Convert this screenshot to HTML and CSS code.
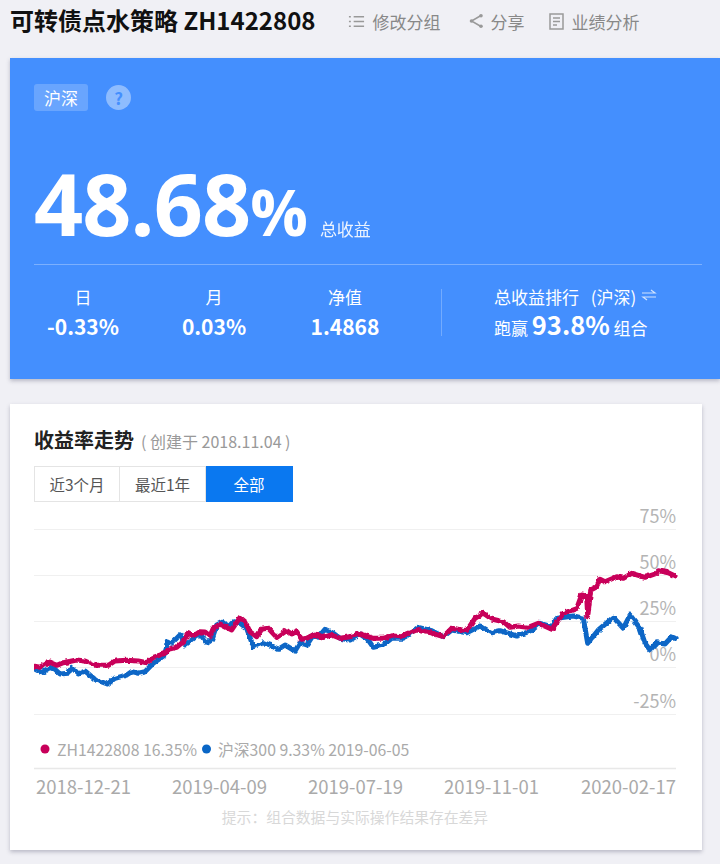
FILE: index.html
```html
<!DOCTYPE html>
<html lang="zh">
<head>
<meta charset="utf-8">
<title>可转债点水策略</title>
<link rel="stylesheet" href="styles.css">
</head>
<body>
<header class="top">
  <h1 class="top-title">可转债点水策略 ZH1422808</h1>
  <nav class="top-actions">
    <a class="action">
      <svg class="action-icon" viewBox="0 0 18 16"><path d="M1 3h2M1 8h2M1 13h2M6 3h11M6 8h11M6 13h11" fill="none" stroke="#999" stroke-width="1.6"/></svg>修改分组</a>
    <a class="action action-share">
      <svg class="action-icon icon-share" viewBox="0 0 14 16"><path d="M12 2.500 2.500 8l9.500 5.500" fill="none" stroke="#999" stroke-width="1.500"/><circle cx="12" cy="2.800" r="1.800" fill="#999"/><circle cx="2.500" cy="8" r="1.800" fill="#999"/><circle cx="12" cy="13.200" r="1.800" fill="#999"/></svg>分享</a>
    <a class="action">
      <svg class="action-icon icon-doc" viewBox="0 0 15 17"><path d="M1 1h13v15H1zM4 5h7M4 8.500h7M4 12h4" fill="none" stroke="#999" stroke-width="1.500"/></svg>业绩分析</a>
  </nav>
</header>

<section class="hero">
  <div class="hero-tags">
    <span class="tag">沪深</span>
    <span class="help">?</span>
  </div>
  <div class="total">
    <span class="total-num">48.68</span><span class="total-pct">%</span>
    <span class="total-label">总收益</span>
  </div>
  <div class="stats">
    <div class="stat"><div class="stat-label">日</div><div class="stat-value">-0.33%</div></div>
    <div class="stat"><div class="stat-label">月</div><div class="stat-value">0.03%</div></div>
    <div class="stat"><div class="stat-label">净值</div><div class="stat-value">1.4868</div></div>
    <div class="rank">
      <div class="rank-title">总收益排行 (沪深)<svg class="swap" viewBox="0 0 16 12"><path d="M1 4h13L10 1M15 8H2l4 3" fill="none" stroke="#fff" stroke-opacity=".75" stroke-width="1.200"/></svg></div>
      <div class="rank-line">跑赢 <strong class="rank-num">93.8%</strong> 组合</div>
    </div>
  </div>
</section>

<section class="card">
  <h2 class="card-title">收益率走势<span class="card-sub">( 创建于 2018.11.04 )</span></h2>
  <div class="ranges">
    <button class="range">近3个月</button>
    <button class="range">最近1年</button>
    <button class="range range-active">全部</button>
  </div>
  <svg class="chart" viewBox="34 500 652 303">
    <defs>
      <filter id="rough" filterUnits="userSpaceOnUse" x="20" y="550" width="670" height="150">
        <feTurbulence type="fractalNoise" baseFrequency=".22" numOctaves="2" seed="4"/>
        <feDisplacementMap in="SourceGraphic" scale="3.500" xChannelSelector="R" yChannelSelector="G"/>
        <feGaussianBlur stdDeviation=".35"/>
      </filter>
    </defs>
    <g class="grid">
      <path d="M34 529.500H676M34 575.500H676M34 621.500H676M34 667.500H676M34 714.500H676"/>
      <path class="axis" d="M34 768.500H676"/>
    </g>
    <g class="y-labels">
      <text x="676" y="523">75%</text>
      <text x="676" y="569">50%</text>
      <text x="676" y="615">25%</text>
      <text x="676" y="661">0%</text>
      <text x="676" y="708">-25%</text>
    </g>
    <g class="lines">
    <polyline class="line line-blue" points="33,668 41.700,672.700 50,667.300 55,669.300 60,674 68.300,673.300 71.700,667.300 78.300,674 85,671 95,679.300 107.300,684 115,678.300 126.700,675 131.700,671.700 138.300,673.300 145,671.700 153.300,663.300 165,655 167.300,641 171.700,643.300 180,635 185,645 191.700,640 196.700,636 201.700,636 206.700,643.300 211.700,640 216.700,625 223.300,621.700 228.300,626.700 233.300,621.700 240,623.300 246.700,628.300 253.300,646.700 263.300,642.700 270,645 278.300,649.300 285,645 295,651 300,642.700 306.700,645 313.300,635 318.300,637.300 325,629.300 333.300,633.300 340,638.300 350,640 360,634 368.300,640 373.300,647.300 383.300,645 391.700,638.300 403.300,638.300 418.300,627.300 431.700,630.700 443.300,636.700 451.700,630 466.700,632.700 480,626 491.700,632.700 500,630.700 516.700,636 531.700,630.700 540,623.300 551.700,626.700 556.700,618.300 573.300,616 583.300,618.300 587.700,643.300 598.300,630 613.300,617.300 623.300,628.300 630,615 640,628.300 645,643.300 650,650 656.700,642.700 665,644 671.700,636.700 675,638.300"/>
    <polyline class="line line-red" points="33.300,666 40,667.300 48.300,661.700 56.700,665.300 63.300,662.700 76.700,660 85,661 95,665.300 108.300,665.300 115,661 126.700,660.300 138.300,661 146.700,662.700 153.300,657.300 165,653.300 168.300,649.300 176.700,647.300 183.300,641.700 188.300,632.700 193.300,636 200,631.700 205,632 210,636 213.300,628.300 220,624 231.700,630 240,617.300 245,621.700 250,631.700 256.700,636.700 261.700,629.300 268.300,628.300 276.700,637.300 286.700,630.700 291.700,634 296.700,631.700 301.700,639.300 306.700,638.300 315,634 321.700,637.700 331.700,635 340,638.300 350,636.700 360,634 373.300,638.300 383.300,638.300 391.700,635.700 400,636.700 416.700,630 430,632.700 443.300,636.700 451.700,628.300 466.700,630.700 475,618.300 483.300,613.300 491.700,619 503.300,621.700 510,627.300 518.300,626 528.300,627.300 538.300,623.300 551.700,629.300 563.300,613.300 576.700,608.300 581.700,595 586.700,596.700 587.700,616.700 590.700,590 596,587.300 600,579.300 605,581.700 616.700,576.700 623.300,578.300 631.700,573.300 645,577.300 655,574 658.300,570.700 668.300,572.700 675,576"/>
    </g>
    <g class="legend">
      <circle cx="45" cy="749" r="4.500" fill="#c8005a"/>
      <text x="57" y="755.500">ZH1422808 16.35%</text>
      <circle cx="206.500" cy="749" r="4.500" fill="#0a66c6"/>
      <text x="218" y="755.500">沪深300 9.33% 2019-06-05</text>
    </g>
    <g class="x-labels">
      <text x="36" y="794">2018-12-21</text>
      <text x="172" y="794">2019-04-09</text>
      <text x="308" y="794">2019-07-19</text>
      <text x="444" y="794">2019-11-01</text>
      <text x="581" y="794">2020-02-17</text>
    </g>
  </svg>
  <p class="hint">提示：组合数据与实际操作结果存在差异</p>
</section>
</body>
</html>
```
FILE: styles.css
```css
* { box-sizing: border-box; }
html, body { margin: 0; padding: 0; }
body {
  width: 720px;
  height: 864px;
  overflow: hidden;
  background: #f0f0f5;
  font-family: "Noto Sans CJK SC", "Noto Sans", sans-serif;
}
.top {
  display: flex;
  align-items: center;
  height: 58px;
  padding: 0 0 16px 10px;
}
.top-title {
  margin: -2px 0 0;
  font-size: 24px;
  font-weight: 700;
  color: #111;
  white-space: nowrap;
  line-height: 42px;
}
.top-actions {
  display: flex;
  margin-left: 33px;
  gap: 29px;
}
.action {
  display: flex;
  align-items: center;
  gap: 7px;
  font-size: 17px;
  color: #888;
  white-space: nowrap;
}
.action-icon { width: 17px; height: 17px; flex: none; }
.icon-share { width: 14px; height: 16px; }
.icon-doc { width: 15px; height: 17px; }
.action-share { margin-right: -4px; }
.hero {
  margin-left: 10px;
  height: 321px;
  padding: 25px 18px 0 24px;
  background: #448ffe;
  box-shadow: 0 2px 4px rgba(60, 60, 90, .3);
  color: #fff;
}
.hero-tags {
  display: flex;
  align-items: center;
  gap: 18px;
  height: 28px;
}
.tag {
  width: 54px;
  height: 27px;
  border-radius: 3px;
  background: rgba(255, 255, 255, .2);
  text-align: center;
  font-size: 17px;
  line-height: 27px;
}
.help {
  width: 25px;
  height: 25px;
  border-radius: 50%;
  background: rgba(255, 255, 255, .4);
  color: #448ffe;
  text-align: center;
  font-size: 17px;
  font-weight: 700;
  line-height: 25px;
}
.total {
  display: flex;
  align-items: baseline;
  height: 153px;
  line-height: 184px;
}
.total-num {
  font-family: "Open Sans", sans-serif;
  font-size: 86px;
  font-weight: 700;
  letter-spacing: -1px;
}
.total-pct {
  font-family: "Open Sans", sans-serif;
  font-size: 64px;
  font-weight: 700;
}
.total-label {
  margin-left: 12px;
  font-size: 17px;
  opacity: .9;
}
.stats {
  display: flex;
  align-items: flex-start;
  border-top: 1px solid rgba(255, 255, 255, .3);
  padding-top: 24px;
}
.stat {
  width: 98px;
  margin: -4px 33px 0 0;
  text-align: center;
}
.stat-label {
  font-size: 17px;
  line-height: 24px;
}
.stat-value {
  font-size: 21px;
  font-weight: 700;
  line-height: 35px;
}
.rank {
  margin-left: 14px;
  flex: 1;
  height: 47px;
  padding-left: 52px;
  border-left: 1px solid rgba(255, 255, 255, .25);
  font-size: 17px;
}
.rank-title {
  margin-top: -1px;
  line-height: 18px;
  white-space: nowrap;
  word-spacing: 8px;
}
.swap { width: 16px; height: 12px; margin-left: 5px; vertical-align: 3px; }
.rank-line { line-height: 36px; white-space: nowrap; }
.rank-num { font-size: 25.500px; font-weight: 700; }
.card {
  margin: 25px 0 0 10px;
  width: 692px;
  height: 446px;
  padding: 21px 16px 0 24px;
  background: #fff;
  box-shadow: 0 2px 4px rgba(60, 60, 90, .3);
}
.card-title {
  margin: 0;
  font-size: 20px;
  font-weight: 700;
  color: #222;
  line-height: 30px;
}
.card-sub {
  margin-left: 7px;
  font-size: 16px;
  font-weight: 400;
  color: #999;
}
.ranges {
  display: flex;
  margin-top: 10px;
}
.range {
  width: 86px;
  height: 36px;
  padding: 0;
  margin: 0;
  border: 1px solid #e4e4e4;
  background: #fff;
  color: #555;
  font-family: inherit;
  font-size: 15.500px;
}
.range + .range { border-left: 0; }
.range-active {
  width: 87px;
  background: #0a78f0;
  border-color: #0a78f0;
  color: #fff;
}
.chart {
  display: block;
  width: 652px;
  height: 303px;
  margin-top: -2px;
  font-family: "Noto Sans CJK SC", "Noto Sans", sans-serif;
}
.grid path { stroke: #f0f0f0; stroke-width: 1; fill: none; }
.grid .axis { stroke: #e8e8e8; stroke-width: 1.500; }
.y-labels text { text-anchor: end; font-size: 18px; fill: #b4b4b4; }
.x-labels text { font-size: 18.500px; fill: #aaa; }
.legend text { font-size: 15.800px; fill: #aaa; }
.lines { filter: url(#rough); }
.line {
  fill: none;
  stroke-width: 5;
  stroke-linejoin: round;
  stroke-linecap: round;
}
.line-red { stroke: #c8005a; }
.line-blue { stroke: #0a66c6; }
.hint {
  margin: 3px 0 0;
  padding-right: 10px;
  text-align: center;
  font-size: 14.800px;
  color: #d8d8d8;
  line-height: 22px;
}
```
